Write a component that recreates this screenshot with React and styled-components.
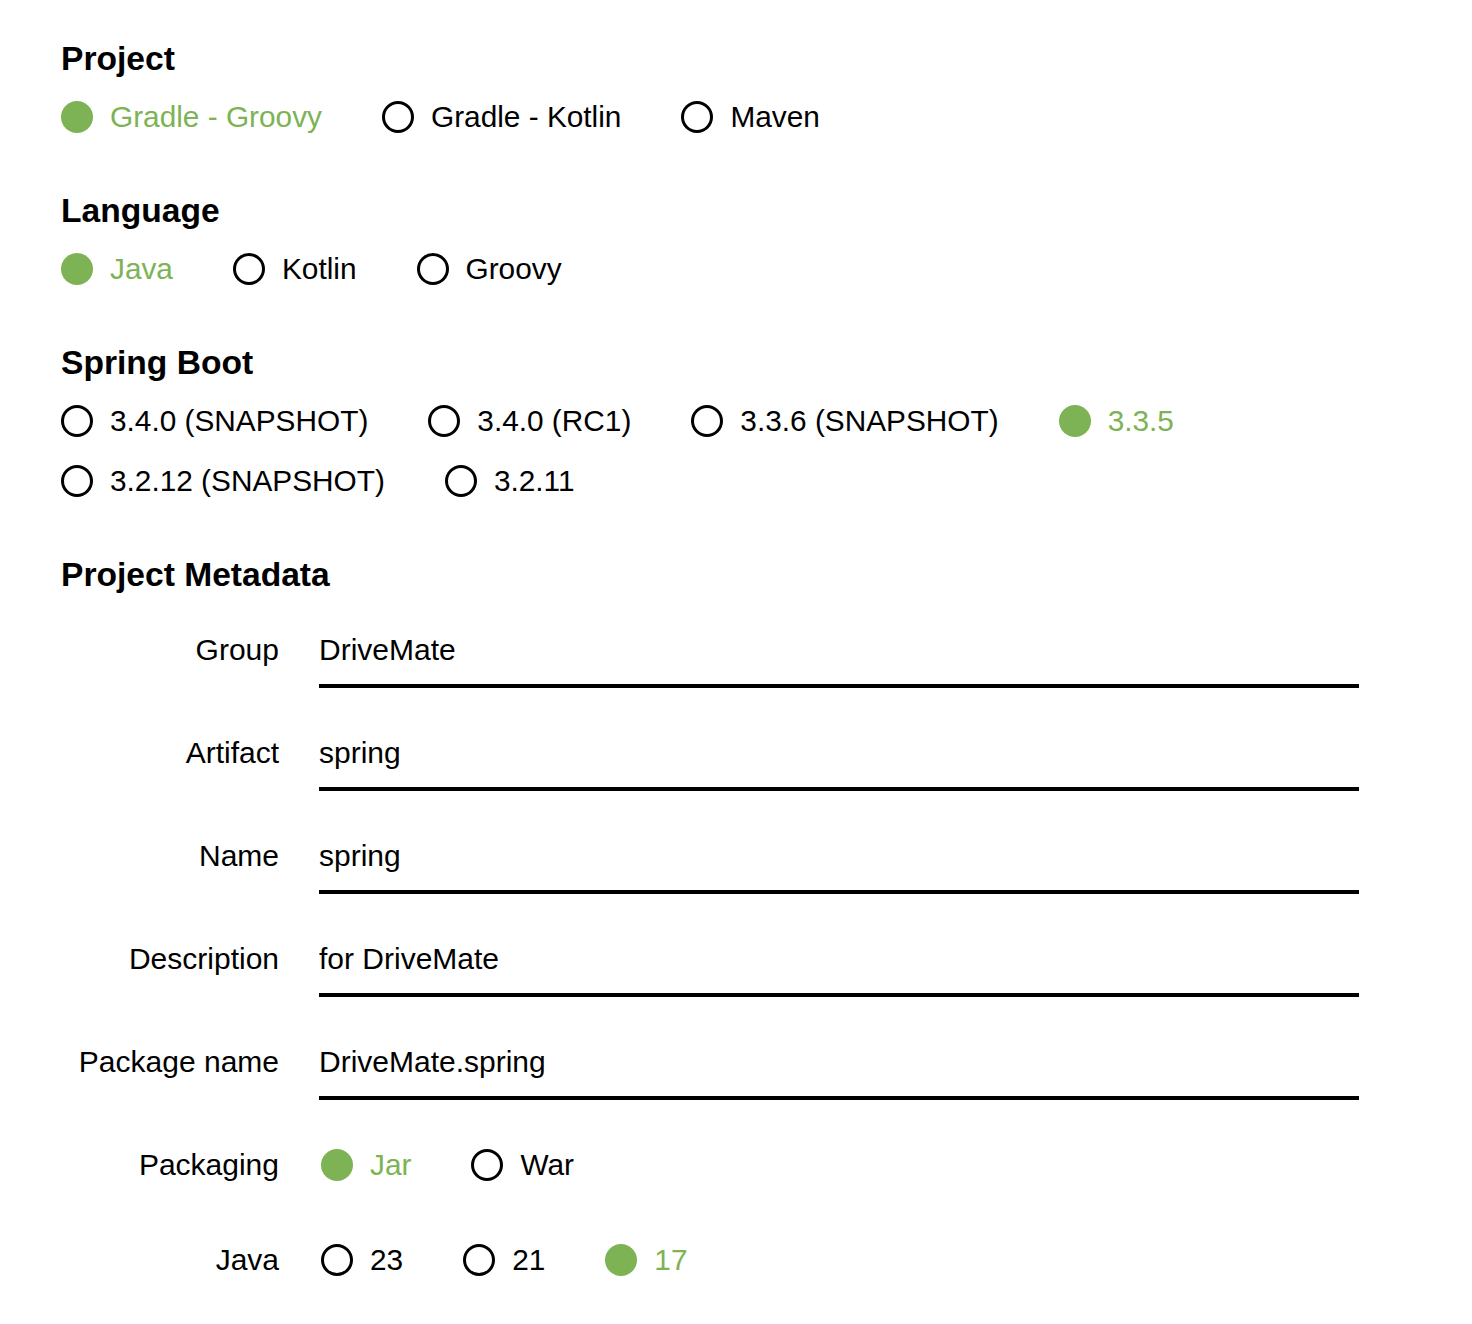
import React from "react";
import styled, { createGlobalStyle } from "styled-components";

const GREEN = "#7db354";

const GlobalStyle = createGlobalStyle`
  html, body {
    margin: 0;
    padding: 0;
    background: #ffffff;
  }
  body {
    font-family: "Liberation Sans", Arial, Helvetica, sans-serif;
    color: #000000;
  }
  * { box-sizing: border-box; }
`;

const Page = styled.div`
  display: flex;
  flex-direction: column;
  padding: 39px 0 40px 61px;
  width: 1472px;
`;

const Section = styled.section`
  display: flex;
  flex-direction: column;
  margin-bottom: ${(p) => p.$gap ?? 44}px;
`;

const Heading = styled.h2`
  margin: 0 0 ${(p) => p.$after ?? 8}px;
  font-size: 33.6px;
  font-weight: 700;
  line-height: 40px;
`;

const Options = styled.div`
  display: flex;
  flex-wrap: wrap;
  column-gap: 60px;
  max-width: 1298px;
  padding-left: ${(p) => p.$indent ?? 0}px;
  padding-bottom: ${(p) => p.$padBottom ?? 0}px;
`;

const Option = styled.label`
  display: inline-flex;
  align-items: center;
  gap: 17px;
  height: ${(p) => p.$h ?? 60}px;
  font-size: 29.8px;
  line-height: 1;
  color: ${(p) => (p.$checked ? GREEN : "#000")};
  cursor: pointer;
`;

const Dot = styled.span`
  flex: none;
  width: 32px;
  height: 32px;
  border-radius: 50%;
  background: ${(p) => (p.$checked ? GREEN : "transparent")};
  border: ${(p) => (p.$checked ? "none" : "3px solid #000")};
`;

const Form = styled.div`
  display: grid;
  grid-template-columns: 218px 1040px;
  column-gap: 40px;
  row-gap: 45px;
`;

const FieldLabel = styled.div`
  text-align: right;
  font-size: 30px;
  line-height: 40px;
`;

const TextField = styled.input`
  display: block;
  width: 100%;
  height: 58px;
  margin: 0;
  padding: 0 0 14px;
  border: none;
  border-bottom: 4px solid #000;
  outline: none;
  background: transparent;
  font-family: inherit;
  font-size: 30px;
  line-height: 40px;
  color: #000;
`;

function RadioGroup({ items, checked, h, padBottom, indent }) {
  return (
    <Options $padBottom={padBottom} $indent={indent}>
      {items.map((it) => (
        <Option key={it} $checked={it === checked} $h={h}>
          <Dot $checked={it === checked} />
          {it}
        </Option>
      ))}
    </Options>
  );
}

const fields = [
  ["Group", "DriveMate"],
  ["Artifact", "spring"],
  ["Name", "spring"],
  ["Description", "for DriveMate"],
  ["Package name", "DriveMate.spring"],
];

export default function App() {
  return (
    <>
      <GlobalStyle />
      <Page>
        <Section>
          <Heading>Project</Heading>
          <RadioGroup
            items={["Gradle - Groovy", "Gradle - Kotlin", "Maven"]}
            checked="Gradle - Groovy"
          />
        </Section>
        <Section>
          <Heading>Language</Heading>
          <RadioGroup items={["Java", "Kotlin", "Groovy"]} checked="Java" />
        </Section>
        <Section>
          <Heading>Spring Boot</Heading>
          <RadioGroup
            items={[
              "3.4.0 (SNAPSHOT)",
              "3.4.0 (RC1)",
              "3.3.6 (SNAPSHOT)",
              "3.3.5",
              "3.2.12 (SNAPSHOT)",
              "3.2.11",
            ]}
            checked="3.3.5"
          />
        </Section>
        <Section $gap={0}>
          <Heading $after={35}>Project Metadata</Heading>
          <Form>
            {fields.map(([label, value]) => (
              <React.Fragment key={label}>
                <FieldLabel>{label}</FieldLabel>
                <TextField defaultValue={value} readOnly />
              </React.Fragment>
            ))}
            <FieldLabel>Packaging</FieldLabel>
            <RadioGroup items={["Jar", "War"]} checked="Jar" h={40} padBottom={10} indent={2} />
            <FieldLabel>Java</FieldLabel>
            <RadioGroup items={["23", "21", "17"]} checked="17" h={40} indent={2} />
          </Form>
        </Section>
      </Page>
    </>
  );
}
